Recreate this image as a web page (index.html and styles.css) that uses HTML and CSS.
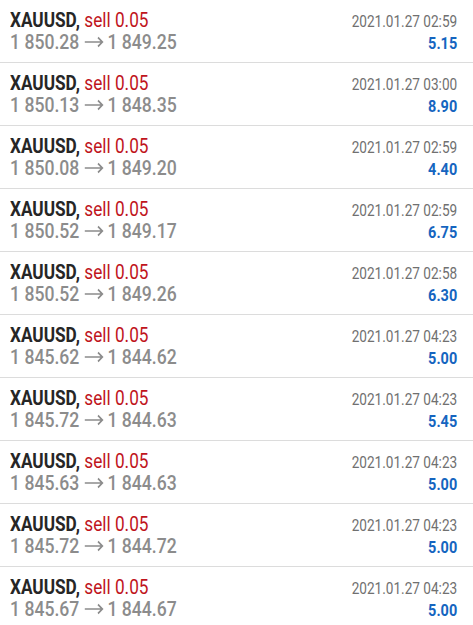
FILE: index.html
```html
<!DOCTYPE html>
<html>
<head>
  <title>History</title>
  <meta name="viewport" content="width=device-width, initial-scale=1.0">
  <link rel="stylesheet" href="styles.css">
</head>
<body>
  <div class="list">
    <div class="row">
      <div class="left">
        <div class="title"><span class="sym">XAUUSD,</span> <span class="side">sell 0.05</span></div>
        <div class="price">1 850.28<svg class="arrow" viewBox="0 0 23 12"><path d="M1 6H21M16 1.5L21 6L16 10.5"/></svg>1 849.25</div>
      </div>
      <div class="right">
        <div class="time">2021.01.27 02:59</div>
        <div class="profit">5.15</div>
      </div>
    </div>
    <div class="row">
      <div class="left">
        <div class="title"><span class="sym">XAUUSD,</span> <span class="side">sell 0.05</span></div>
        <div class="price">1 850.13<svg class="arrow" viewBox="0 0 23 12"><path d="M1 6H21M16 1.5L21 6L16 10.5"/></svg>1 848.35</div>
      </div>
      <div class="right">
        <div class="time">2021.01.27 03:00</div>
        <div class="profit">8.90</div>
      </div>
    </div>
    <div class="row">
      <div class="left">
        <div class="title"><span class="sym">XAUUSD,</span> <span class="side">sell 0.05</span></div>
        <div class="price">1 850.08<svg class="arrow" viewBox="0 0 23 12"><path d="M1 6H21M16 1.5L21 6L16 10.5"/></svg>1 849.20</div>
      </div>
      <div class="right">
        <div class="time">2021.01.27 02:59</div>
        <div class="profit">4.40</div>
      </div>
    </div>
    <div class="row">
      <div class="left">
        <div class="title"><span class="sym">XAUUSD,</span> <span class="side">sell 0.05</span></div>
        <div class="price">1 850.52<svg class="arrow" viewBox="0 0 23 12"><path d="M1 6H21M16 1.5L21 6L16 10.5"/></svg>1 849.17</div>
      </div>
      <div class="right">
        <div class="time">2021.01.27 02:59</div>
        <div class="profit">6.75</div>
      </div>
    </div>
    <div class="row">
      <div class="left">
        <div class="title"><span class="sym">XAUUSD,</span> <span class="side">sell 0.05</span></div>
        <div class="price">1 850.52<svg class="arrow" viewBox="0 0 23 12"><path d="M1 6H21M16 1.5L21 6L16 10.5"/></svg>1 849.26</div>
      </div>
      <div class="right">
        <div class="time">2021.01.27 02:58</div>
        <div class="profit">6.30</div>
      </div>
    </div>
    <div class="row">
      <div class="left">
        <div class="title"><span class="sym">XAUUSD,</span> <span class="side">sell 0.05</span></div>
        <div class="price">1 845.62<svg class="arrow" viewBox="0 0 23 12"><path d="M1 6H21M16 1.5L21 6L16 10.5"/></svg>1 844.62</div>
      </div>
      <div class="right">
        <div class="time">2021.01.27 04:23</div>
        <div class="profit">5.00</div>
      </div>
    </div>
    <div class="row">
      <div class="left">
        <div class="title"><span class="sym">XAUUSD,</span> <span class="side">sell 0.05</span></div>
        <div class="price">1 845.72<svg class="arrow" viewBox="0 0 23 12"><path d="M1 6H21M16 1.5L21 6L16 10.5"/></svg>1 844.63</div>
      </div>
      <div class="right">
        <div class="time">2021.01.27 04:23</div>
        <div class="profit">5.45</div>
      </div>
    </div>
    <div class="row">
      <div class="left">
        <div class="title"><span class="sym">XAUUSD,</span> <span class="side">sell 0.05</span></div>
        <div class="price">1 845.63<svg class="arrow" viewBox="0 0 23 12"><path d="M1 6H21M16 1.5L21 6L16 10.5"/></svg>1 844.63</div>
      </div>
      <div class="right">
        <div class="time">2021.01.27 04:23</div>
        <div class="profit">5.00</div>
      </div>
    </div>
    <div class="row">
      <div class="left">
        <div class="title"><span class="sym">XAUUSD,</span> <span class="side">sell 0.05</span></div>
        <div class="price">1 845.72<svg class="arrow" viewBox="0 0 23 12"><path d="M1 6H21M16 1.5L21 6L16 10.5"/></svg>1 844.72</div>
      </div>
      <div class="right">
        <div class="time">2021.01.27 04:23</div>
        <div class="profit">5.00</div>
      </div>
    </div>
    <div class="row">
      <div class="left">
        <div class="title"><span class="sym">XAUUSD,</span> <span class="side">sell 0.05</span></div>
        <div class="price">1 845.67<svg class="arrow" viewBox="0 0 23 12"><path d="M1 6H21M16 1.5L21 6L16 10.5"/></svg>1 844.67</div>
      </div>
      <div class="right">
        <div class="time">2021.01.27 04:23</div>
        <div class="profit">5.00</div>
      </div>
    </div>
  </div>
</body>
</html>
```

FILE: styles.css
```css
html, body {
  margin: 0;
  padding: 0;
  background-color: #fff;
  overflow: hidden;
}

body {
  font-family: Roboto, "Noto Sans", sans-serif;
}

.row {
  display: flex;
  justify-content: space-between;
  height: 62px;
  border-bottom: 1px solid #dcdcdc;
  padding: 0 16px 0 10px;
}

.left, .right {
  padding-top: 9px;
}

.title, .price {
  font-size: 20px;
  line-height: 22px;
  white-space: nowrap;
  transform: scaleX(0.86);
  transform-origin: left center;
}

.price {
  transform: scaleX(0.88);
  color: #8c8c8c;
  font-weight: 500;
}

.sym {
  color: #262626;
  font-weight: 700;
}

.side {
  color: #c0141c;
}

.arrow {
  width: 23px;
  height: 12px;
  margin: 0 4px 0 5px;
  vertical-align: 1px;
  fill: none;
  stroke: #8c8c8c;
  stroke-width: 1.7;
}

.right {
  text-align: right;
}

.time {
  font-size: 16px;
  line-height: 22px;
  color: #707070;
  margin-top: 2px;
  transform: scaleX(0.85);
  transform-origin: right center;
  white-space: nowrap;
}

.profit {
  font-size: 17px;
  line-height: 20px;
  color: #1565c0;
  font-weight: 700;
  transform: scaleX(0.85);
  transform-origin: right center;
}
```
